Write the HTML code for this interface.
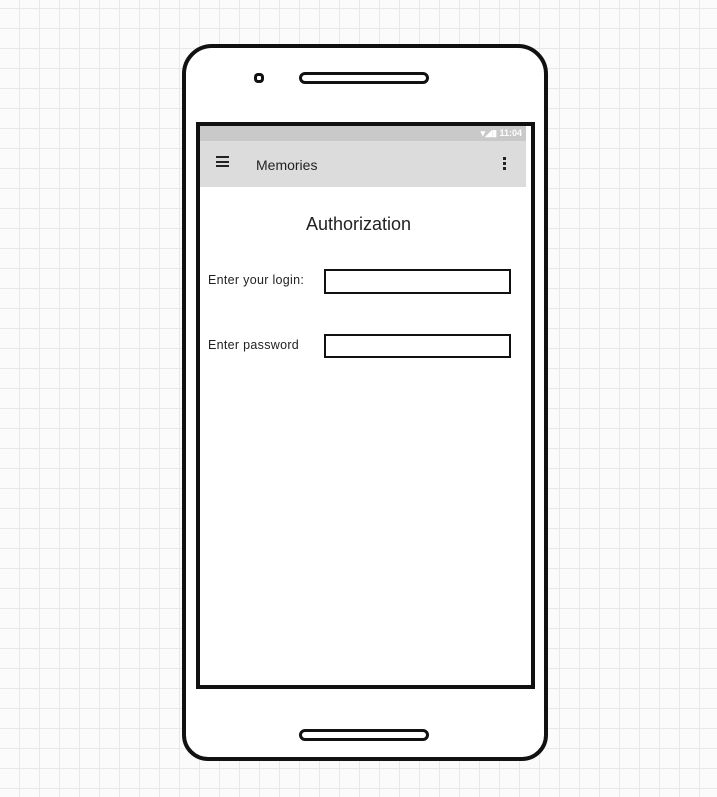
<!DOCTYPE html><html><head><style>
body{margin:0;width:717px;height:797px;overflow:hidden;background-color:#fbfbfb;background-image:linear-gradient(#e8e8e8 1px,transparent 1px),linear-gradient(90deg,#e8e8e8 1px,transparent 1px);background-size:20px 20px;background-position:-1px 8px, 19px 0;font-family:"Liberation Sans",sans-serif;position:relative}
.a{position:absolute;box-sizing:border-box}
</style></head><body>
<div class="a" style="left:182px;top:44px;width:366px;height:717px;border:4px solid #111;border-radius:30px 30px 26px 26px;background:#fff"></div>
<div class="a" style="left:254px;top:73px;width:10px;height:10px;border:3px solid #111;border-radius:4px"></div>
<div class="a" style="left:299px;top:72px;width:130px;height:12px;border:3px solid #111;border-radius:6px"></div>
<div class="a" style="left:299px;top:729px;width:130px;height:12px;border:3px solid #111;border-radius:6px"></div>
<div class="a" style="left:196px;top:122px;width:339px;height:567px;border:4px solid #111;background:#fff"></div>
<div class="a" style="left:200px;top:126px;width:326px;height:15px;background:#c9c9c9;color:#fff;font-size:9px;text-align:right;padding-right:4px;line-height:15px;font-weight:bold">▾◢▮ 11:04</div>
<div class="a" style="left:200px;top:141px;width:326px;height:46px;background:#dcdcdc"></div>
<div class="a" style="left:216px;top:156px;width:13px;height:11px;border-top:2px solid #222;border-bottom:2px solid #222"></div>
<div class="a" style="left:216px;top:161px;width:13px;height:2px;background:#222"></div>
<div class="a" style="left:256px;top:157px;font-size:14px;color:#222">Memories</div>
<div class="a" style="left:503px;top:157px;width:3px;height:3px;background:#222;box-shadow:0 5px #222,0 10px #222"></div>
<div class="a" style="left:306px;top:214px;font-size:18px;color:#222">Authorization</div>
<div class="a" style="left:208px;top:273px;font-size:12.5px;color:#222;letter-spacing:.3px">Enter your login:</div>
<div class="a" style="left:208px;top:338px;font-size:12.5px;color:#222;letter-spacing:.3px">Enter password</div>
<div class="a" style="left:324px;top:269px;width:187px;height:25px;border:2px solid #111"></div>
<div class="a" style="left:324px;top:334px;width:187px;height:24px;border:2px solid #111"></div>
</body></html>
